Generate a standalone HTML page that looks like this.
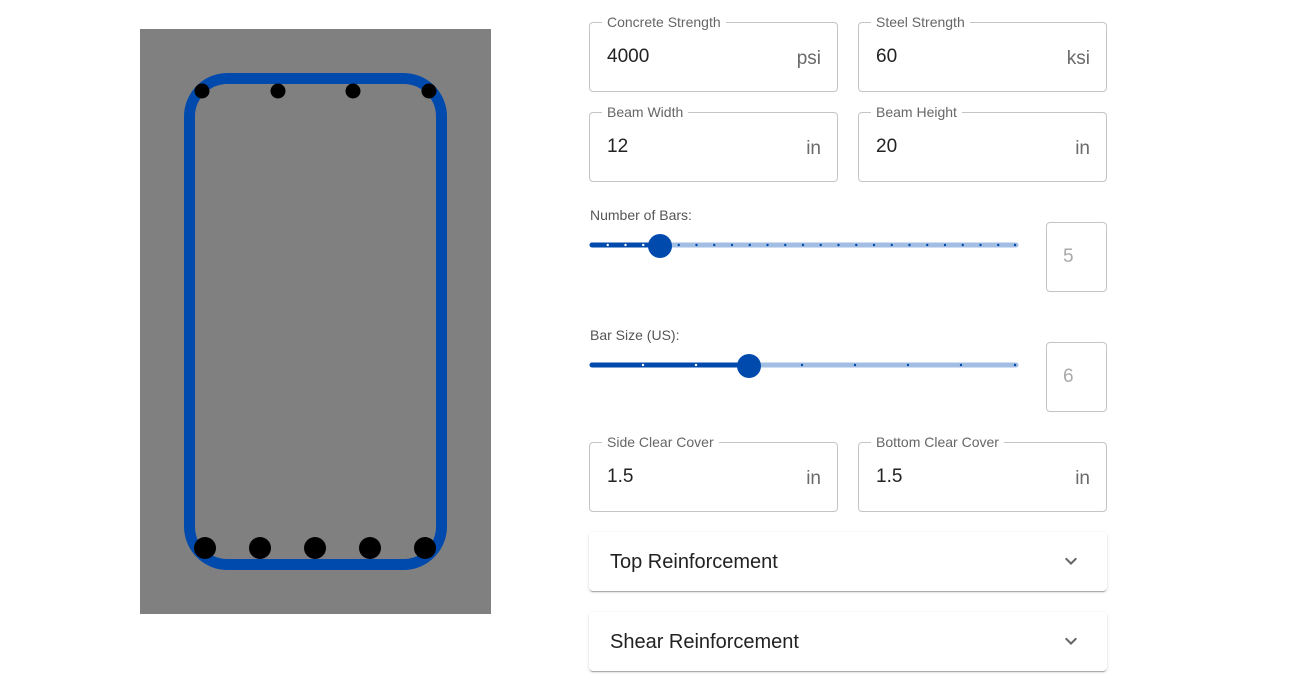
<!DOCTYPE html>
<html><head><style>
body{margin:0;width:1294px;height:680px;background:#fff;font-family:"Liberation Sans",sans-serif;position:relative;overflow:hidden}
.f{position:absolute;width:249px;height:70px;border:1px solid #c4c4c4;border-radius:4px;box-sizing:border-box}
.f .l{position:absolute;top:-9px;left:12px;background:#fff;padding:0 5px;font-size:14px;color:#666;line-height:16px}
.f .v{position:absolute;left:17px;top:23px;font-size:19px;color:#222}
.f .u{position:absolute;right:16px;top:25px;font-size:19px;color:#6a6a6a}
.lab{position:absolute;left:590px;font-size:14px;color:#555}
.box{position:absolute;left:1046px;width:61px;height:70px;border:1px solid #c4c4c4;border-radius:4px;box-sizing:border-box;font-size:19px;color:#aaa;padding-left:16px;line-height:68px}
.acc{position:absolute;left:589px;width:518px;height:59px;background:#fff;border-radius:4px;box-shadow:0 2px 1px -1px rgba(0,0,0,.2),0 1px 1px rgba(0,0,0,.14),0 1px 3px rgba(0,0,0,.12)}
.acc span{position:absolute;left:21px;top:19px;font-size:20px;color:#222}
.acc svg{position:absolute;left:470px;top:17px}
</style></head><body>
<svg style="position:absolute;left:0;top:0" width="520" height="680">
<rect x="140" y="29" width="351" height="585" fill="#808080"/>
<rect x="189.5" y="78.5" width="252" height="486" rx="38" fill="none" stroke="#004aad" stroke-width="11"/>
<g fill="#000"><circle cx="202" cy="91" r="7.5"/><circle cx="278" cy="91" r="7.5"/><circle cx="353" cy="91" r="7.5"/><circle cx="429" cy="91" r="7.5"/>
<circle cx="205" cy="548" r="11"/><circle cx="260" cy="548" r="11"/><circle cx="315" cy="548" r="11"/><circle cx="370" cy="548" r="11"/><circle cx="425" cy="548" r="11"/></g>
</svg>
<div class="f" style="left:589px;top:22px"><div class="l">Concrete Strength</div><div class="v">4000</div><div class="u">psi</div></div>
<div class="f" style="left:858px;top:22px"><div class="l">Steel Strength</div><div class="v">60</div><div class="u">ksi</div></div>
<div class="f" style="left:589px;top:112px"><div class="l">Beam Width</div><div class="v">12</div><div class="u">in</div></div>
<div class="f" style="left:858px;top:112px"><div class="l">Beam Height</div><div class="v">20</div><div class="u">in</div></div>
<div class="lab" style="top:207px">Number of Bars:</div>
<div class="box" style="top:222px">5</div>
<div class="lab" style="top:327px">Bar Size (US):</div>
<div class="box" style="top:342px">6</div>
<svg style="position:absolute;left:580px;top:225px" width="450" height="160">
<line x1="12" y1="20" x2="436" y2="20" stroke="#a3bee3" stroke-width="5" stroke-linecap="round"/>
<line x1="12" y1="20" x2="80" y2="20" stroke="#004aad" stroke-width="5" stroke-linecap="round"/>
<g fill="#fff"><circle cx="27.75" cy="20" r="1.2"/><circle cx="45.5" cy="20" r="1.2"/><circle cx="63.25" cy="20" r="1.2"/></g>
<g fill="#004aad">
<circle cx="98.75" cy="20" r="1.2"/><circle cx="116.5" cy="20" r="1.2"/><circle cx="134.25" cy="20" r="1.2"/><circle cx="152" cy="20" r="1.2"/><circle cx="169.75" cy="20" r="1.2"/><circle cx="187.5" cy="20" r="1.2"/><circle cx="205.25" cy="20" r="1.2"/><circle cx="223" cy="20" r="1.2"/><circle cx="240.75" cy="20" r="1.2"/><circle cx="258.5" cy="20" r="1.2"/><circle cx="276.25" cy="20" r="1.2"/><circle cx="294" cy="20" r="1.2"/><circle cx="311.75" cy="20" r="1.2"/><circle cx="329.5" cy="20" r="1.2"/><circle cx="347.25" cy="20" r="1.2"/><circle cx="365" cy="20" r="1.2"/><circle cx="382.75" cy="20" r="1.2"/><circle cx="400.5" cy="20" r="1.2"/><circle cx="418.25" cy="20" r="1.2"/><circle cx="435" cy="20" r="1.2"/>
<circle cx="80" cy="21" r="12"/></g>
<line x1="12" y1="140" x2="436" y2="140" stroke="#a3bee3" stroke-width="5" stroke-linecap="round"/>
<line x1="12" y1="140" x2="169" y2="140" stroke="#004aad" stroke-width="5" stroke-linecap="round"/>
<g fill="#fff"><circle cx="63" cy="140" r="1.2"/><circle cx="116" cy="140" r="1.2"/></g>
<g fill="#004aad"><circle cx="222" cy="140" r="1.2"/><circle cx="275" cy="140" r="1.2"/><circle cx="328" cy="140" r="1.2"/><circle cx="381" cy="140" r="1.2"/><circle cx="435" cy="140" r="1.2"/>
<circle cx="169" cy="141" r="12"/></g>
</svg>
<div class="f" style="left:589px;top:442px"><div class="l">Side Clear Cover</div><div class="v">1.5</div><div class="u">in</div></div>
<div class="f" style="left:858px;top:442px"><div class="l">Bottom Clear Cover</div><div class="v">1.5</div><div class="u">in</div></div>
<div class="acc" style="top:532px"><span>Top Reinforcement</span><svg width="24" height="24" viewBox="0 0 24 24"><path d="M7.41 8.59 12 13.17l4.59-4.58L18 10l-6 6-6-6z" fill="#666"/></svg></div>
<div class="acc" style="top:612px"><span>Shear Reinforcement</span><svg width="24" height="24" viewBox="0 0 24 24"><path d="M7.41 8.59 12 13.17l4.59-4.58L18 10l-6 6-6-6z" fill="#666"/></svg></div>
</body></html>
